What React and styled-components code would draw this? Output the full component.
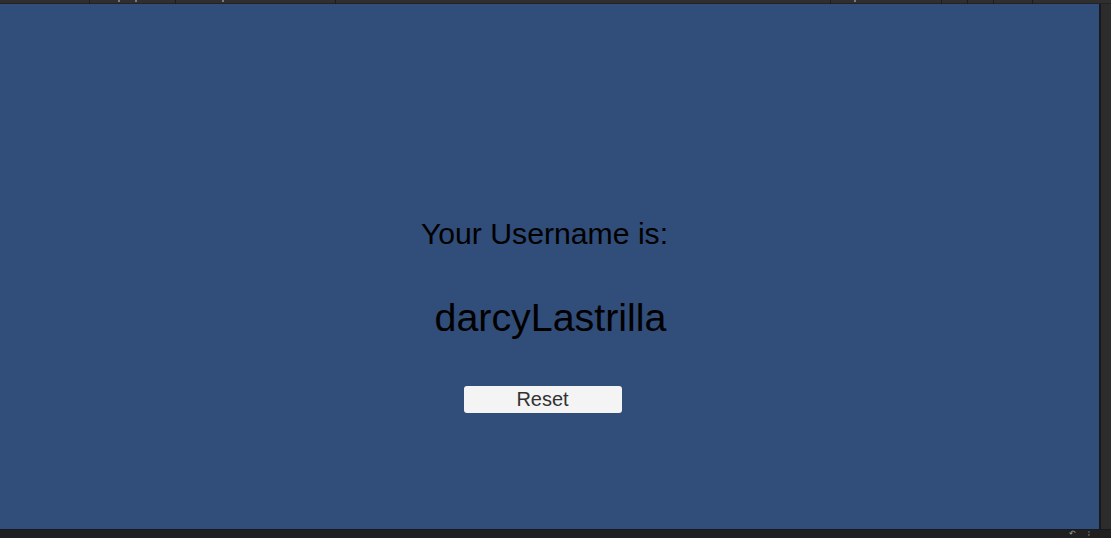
import React from 'react'
import styled, { createGlobalStyle } from 'styled-components'

const GlobalStyle = createGlobalStyle`
    html, body {
        margin: 0;
        padding: 0;
        background: #202020;
        overflow: hidden;
    }
    body {
        font-family: "Liberation Sans", Arial, sans-serif;
    }
`

const Editor = styled.div`
    width: 1111px;
    height: 538px;
    display: grid;
    grid-template-columns: 1099px 2px 10px;
    grid-template-rows: 4px 525px 9px;
    background: #2b2b2b;
`

const Toolbar = styled.div`
    grid-column: 1 / 4;
    display: flex;
    background: #1c1c1c;
    gap: 1px;
`

const ToolSegment = styled.div`
    width: ${(p) => p.w}px;
    flex: ${(p) => (p.grow ? 1 : 'none')};
    background: #2f2f2f;
    position: relative;
    border-bottom: 1px solid #232323;
    box-sizing: border-box;
`

const Tick = styled.span`
    position: absolute;
    left: ${(p) => p.x}px;
    top: 0;
    width: 2px;
    height: 2px;
    background: #7a7a7a;
`

const GameView = styled.main`
    background: #314d79;
    display: flex;
    flex-direction: column;
    align-items: center;
    padding-top: 212px;
    box-sizing: border-box;
    color: #000;
`

const Label = styled.div`
    font-size: 30.2px;
    line-height: 35px;
    margin-left: -10px;
`

const Username = styled.div`
    font-size: 39.4px;
    line-height: 46px;
    margin-top: 43px;
    margin-left: 2px;
`

const ResetButton = styled.button`
    margin-top: 46px;
    width: 158px;
    height: 27px;
    margin-left: -14px;
    border: none;
    border-radius: 3px;
    background: #f4f4f4;
    color: #323232;
    font-family: "Liberation Sans", Arial, sans-serif;
    font-size: 20px;
    line-height: 27px;
    padding: 0;
    cursor: pointer;
`

const Edge = styled.div`
    background: #16191f;
`

const SideStrip = styled.div`
    background: #2c2c2c;
`

const StatusBar = styled.div`
    grid-column: 1 / 4;
    background: #202020;
    border-top: 1px solid #141a22;
    box-sizing: border-box;
    display: flex;
    justify-content: flex-end;
    align-items: flex-start;
    gap: 12px;
    padding-right: 21px;
    overflow: hidden;
`

const StatusGlyph = styled.span`
    color: #9a9a9a;
    font-size: 8px;
    line-height: 8px;
`

const segments = [
    { w: 89 },
    { w: 85, ticks: [28, 45] },
    { w: 159, ticks: [46] },
    { w: 494 },
    { w: 110, ticks: [23] },
    { w: 25 },
    { w: 25 },
    { w: 38 },
    { grow: true },
]

const App = () => {
    return (
        <>
            <GlobalStyle />
            <Editor>
                <Toolbar>
                    {segments.map((s, i) => (
                        <ToolSegment key={i} w={s.w} grow={s.grow}>
                            {(s.ticks || []).map((t) => (
                                <Tick key={t} x={t} />
                            ))}
                        </ToolSegment>
                    ))}
                </Toolbar>
                <GameView>
                    <Label>Your Username is:</Label>
                    <Username>darcyLastrilla</Username>
                    <ResetButton>Reset</ResetButton>
                </GameView>
                <Edge />
                <SideStrip />
                <StatusBar>
                    <StatusGlyph>↶</StatusGlyph>
                    <StatusGlyph>⁞</StatusGlyph>
                </StatusBar>
            </Editor>
        </>
    )
}

export default App
